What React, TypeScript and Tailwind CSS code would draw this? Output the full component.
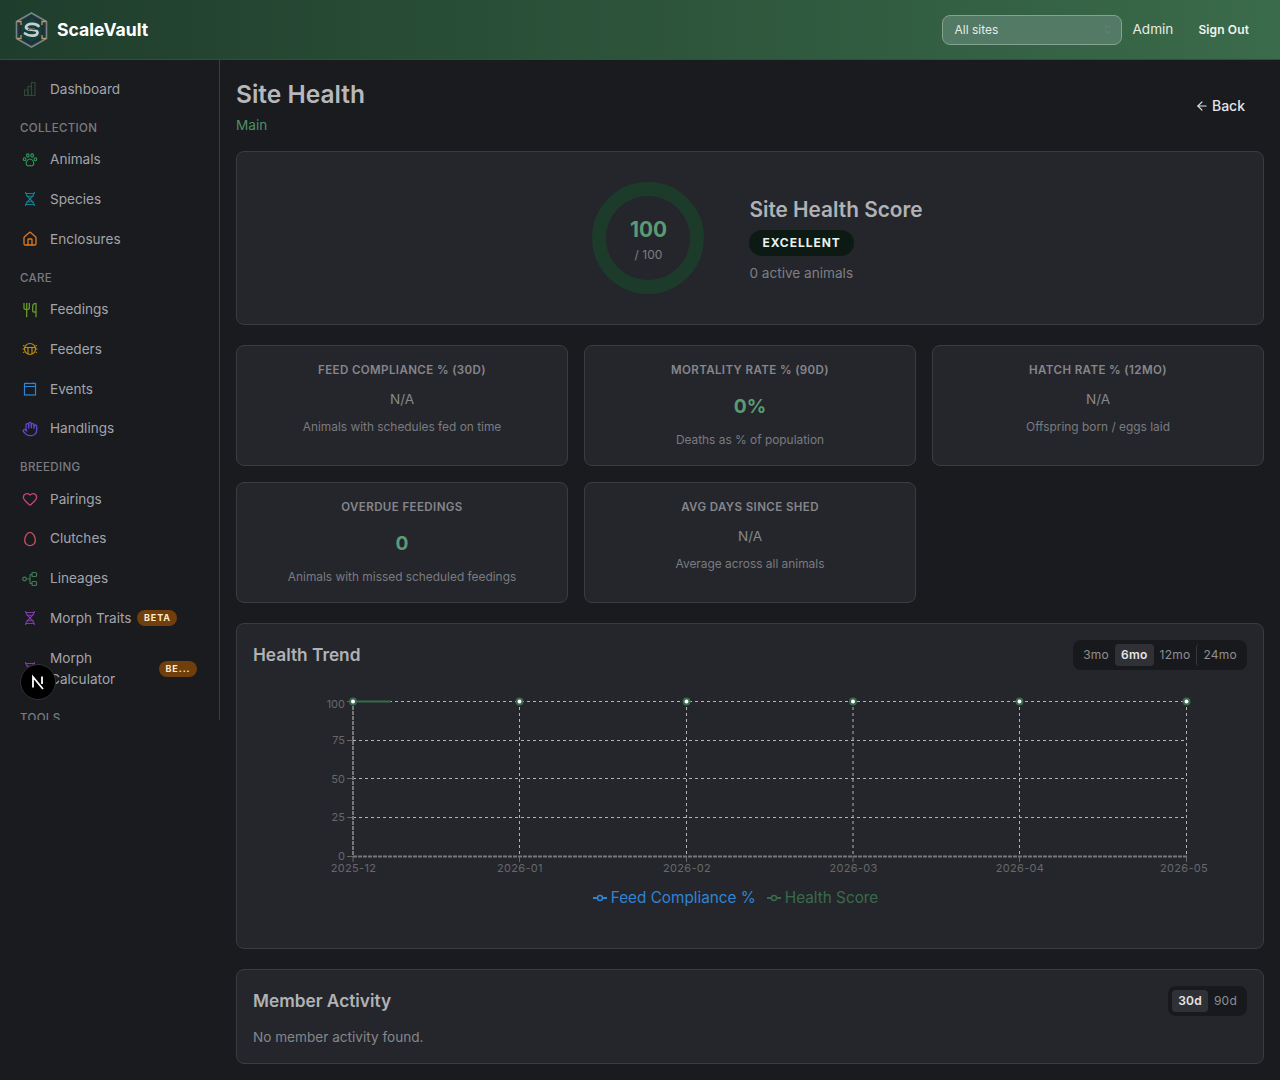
import { useState } from "react";
import { ArrowLeft, ChevronsUpDown, Egg, Hand, Heart, House, Utensils } from "lucide-react";

const font = "font-['Inter','Noto_Sans',sans-serif]";

function DashboardIcon() {
  return (
    <svg width="16" height="16" viewBox="0 0 16 16" fill="none" stroke="#2c4a38" strokeWidth="1.1">
      <rect x="2.5" y="9" width="3.5" height="5.5" />
      <rect x="6" y="5.5" width="3.5" height="9" />
      <rect x="9.5" y="1.5" width="3.5" height="13" />
    </svg>
  );
}

function LineageIcon() {
  return (
    <svg width="16" height="16" viewBox="0 0 16 16" fill="none" stroke="#3f7a57" strokeWidth="1.2">
      <circle cx="2.5" cy="8" r="1.8" />
      <rect x="10" y="1.5" width="4.5" height="4" rx="1" />
      <rect x="10" y="10.5" width="4.5" height="4" rx="1" />
      <path d="M4.3 8H8M8 3.5V12.5M8 3.5H10M8 12.5H10" />
    </svg>
  );
}

function HelixIcon({ color }: { color: string }) {
  return (
    <svg width="16" height="16" viewBox="0 0 16 16" fill="none" stroke={color} strokeWidth="1.1">
      <path d="M3.5 1C3.5 6 12.5 10 12.5 15" />
      <path d="M12.5 1C12.5 6 3.5 10 3.5 15" />
      <path d="M3.5 2.5H12.5M4.5 5.2H11.5M4.5 10.8H11.5M3.5 13.5H12.5" />
    </svg>
  );
}

function PawIcon() {
  return (
    <svg width="16" height="16" viewBox="0 0 16 16" fill="none" stroke="#2f9e58" strokeWidth="1.1">
      <ellipse cx="2.6" cy="7.2" rx="1.3" ry="1.5" />
      <ellipse cx="5.8" cy="3.5" rx="1.3" ry="1.6" />
      <ellipse cx="10.2" cy="3.5" rx="1.3" ry="1.6" />
      <ellipse cx="13.4" cy="7.2" rx="1.3" ry="1.5" />
      <path d="M8 7C6 7 4.5 9.5 4.2 11.2C3.8 13.5 6 14.5 8 13.6C10 14.5 12.2 13.5 11.8 11.2C11.5 9.5 10 7 8 7Z" />
    </svg>
  );
}

function FeederIcon() {
  return (
    <svg width="16" height="16" viewBox="0 0 16 16" fill="none" stroke="#c08c10" strokeWidth="1.2">
      <circle cx="8" cy="8" r="5.5" />
      <path d="M2.5 6.5H13.5M6 6.5V13M10 6.5V13M2.5 5L1 4.5M13.5 5L15 4.5M2.5 8H0.5M13.5 8H15.5M2.5 11L1 11.5M13.5 11L15 11.5" />
    </svg>
  );
}

function CalendarIcon() {
  return (
    <svg width="16" height="16" viewBox="0 0 16 16" fill="none" stroke="#2f84d6" strokeWidth="1.2">
      <rect x="2.5" y="2.5" width="11" height="11.5" />
      <path d="M2.5 5.5H13.5M5 1.5V3M11 1.5V3" />
    </svg>
  );
}

function Logo() {
  return (
    <svg width="33" height="36" viewBox="0 0 33 36">
      <polygon points="16.5,1 31.5,9.5 31.5,26.5 16.5,35 1.5,26.5 1.5,9.5" fill="#22343a" stroke="#75858a" strokeWidth="1.6" />
      <polygon points="16.5,5 27.5,11.5 27.5,24.5 16.5,31 5.5,24.5 5.5,11.5" fill="#12413d" stroke="#1d2b2f" strokeWidth="1" />
      <path d="M23.5 14C20.5 10.5 10.5 11.5 11 15.5C11.5 19 22.5 16 22.5 20.5C22.5 24.5 14 24.5 10 21.5" fill="none" stroke="#c9ccc8" strokeWidth="2.8" strokeLinecap="round" />
      <path d="M13 17.5C16 15.5 20 19 23 16" fill="none" stroke="#20282b" strokeWidth="1" />
      <path d="M2 9.5H6V13M31 9.5H27V13M2 26.5H6V23M31 26.5H27V23" fill="none" stroke="#c59a4b" strokeWidth="1.3" />
    </svg>
  );
}

function NavItem({ icon, label, badge, truncateBadge }: { icon: React.ReactNode; label: string; badge?: string; truncateBadge?: boolean }) {
  return (
    <a className="flex items-center gap-[12px] px-[22px] py-[9.4px] text-[13.6px] leading-[21px] text-[#a3a5ab]">
      <span className="flex w-[16px] shrink-0 justify-center">{icon}</span>
      {truncateBadge ? <span className="w-[90px]">{label}</span> : <span>{label}</span>}
      {badge && (
        <span
          className={`${truncateBadge ? "ml-auto w-[38px]" : "-ml-[6px]"} truncate rounded-full bg-[#713f0b] px-[6.5px] py-[1px] text-[9px] leading-[14px] font-bold tracking-[0.1em] text-[#fdeccf]`}
        >
          {badge}
        </span>
      )}
    </a>
  );
}

function SectionLabel({ children }: { children: string }) {
  return (
    <div className="px-[20px] pt-[9.5px] pb-[3px] text-[11.52px] leading-[18px] font-medium tracking-[0.03em] text-[#797b80]">
      {children}
    </div>
  );
}

function Sidebar() {
  return (
    <aside className="relative h-[660px] w-[220px] shrink-0 overflow-hidden border-r border-[#3a3c42] pt-[9.5px]">
      <NavItem icon={<DashboardIcon />} label="Dashboard" />
      <SectionLabel>COLLECTION</SectionLabel>
      <NavItem icon={<PawIcon />} label="Animals" />
      <NavItem icon={<HelixIcon color="#157f91" />} label="Species" />
      <NavItem icon={<House size={16} color="#d97a22" />} label="Enclosures" />
      <SectionLabel>CARE</SectionLabel>
      <NavItem icon={<Utensils size={16} color="#65962b" />} label="Feedings" />
      <NavItem icon={<FeederIcon />} label="Feeders" />
      <NavItem icon={<CalendarIcon />} label="Events" />
      <NavItem icon={<Hand size={16} color="#6547d0" />} label="Handlings" />
      <SectionLabel>BREEDING</SectionLabel>
      <NavItem icon={<Heart size={16} color="#c7427f" />} label="Pairings" />
      <NavItem icon={<Egg size={16} color="#c9525f" />} label="Clutches" />
      <NavItem icon={<LineageIcon />} label="Lineages" />
      <NavItem icon={<HelixIcon color="#7e3aa8" />} label="Morph Traits" badge="BETA" />
      <NavItem icon={<HelixIcon color="#7e3aa8" />} label="Morph Calculator" badge="BE..." truncateBadge />
      <SectionLabel>TOOLS</SectionLabel>
    </aside>
  );
}

function StatCard({ title, value, sub, good }: { title: string; value: string; sub: string; good?: boolean }) {
  return (
    <div className="flex h-[121px] flex-col items-center rounded-[8px] border border-[#3a3c42] bg-[#25262b] pt-[15px] text-center">
      <div className="text-[11.52px] leading-[18px] font-semibold tracking-[0.035em] text-[#85878c]">{title}</div>
      {good ? (
        <div className="mt-[11px] text-[19.2px] leading-[33px] font-bold text-[#5b9a74]">{value}</div>
      ) : (
        <div className="mt-[10px] text-[13.6px] leading-[21px] text-[#85878c]">{value}</div>
      )}
      <div className="mt-[8px] text-[11.9px] leading-[18px] text-[#797b80]">{sub}</div>
    </div>
  );
}

function Segmented({ options, active }: { options: string[]; active: string }) {
  return (
    <div className="flex items-center rounded-[8px] bg-[#18191d] p-[4px]">
      {options.map((o, i) => (
        <button
          key={o}
          className={`rounded-[4px] px-[6px] py-[1px] text-[12px] leading-[20px] tracking-[0.02em] ${
            o === active ? "bg-[#303136] font-semibold text-[#e4e5e8]" : "text-[#8d8f94]"
          } ${i === 3 ? "border-l border-[#36383d]" : ""}`}
        >
          {o}
        </button>
      ))}
    </div>
  );
}

function TrendChart() {
  const xs = [353, 519.5, 686.5, 853, 1019.5, 1186.5];
  const labels = ["2025-12", "2026-01", "2026-02", "2026-03", "2026-04", "2026-05"];
  const ys = [
    { y: 701.5, l: "100", ty: 704 },
    { y: 740.5, l: "75", ty: 740 },
    { y: 778.5, l: "50", ty: 779 },
    { y: 817.5, l: "25", ty: 817 },
    { y: 856.5, l: "0", ty: 856 },
  ];
  return (
    <svg width="1026" height="250" viewBox="237 680 1026 250" className="mt-[10px] block">
      {ys.map((t, i) => (
        <g key={t.l}>
          {i < 4 && <line x1="353" x2="1187" y1={t.y} y2={t.y} stroke="#b4b4b4" strokeWidth="1" strokeDasharray="3 3" />}
          <line x1="347" x2="353" y1={t.y} y2={t.y} stroke="#666" />
          <text x="345" y={t.ty + 4} textAnchor="end" fontSize="11" fill="#66686c" fontFamily="Inter">{t.l}</text>
        </g>
      ))}
      {xs.map((x, i) => (
        <g key={x}>
          {i > 0 && <line x1={x} x2={x} y1="701" y2="856" stroke="#b4b4b4" strokeWidth="1" strokeDasharray="3 3" />}
          <line x1={x} x2={x} y1="856" y2="862" stroke="#666" />
          <text x={i === 5 ? 1184 : x + 0.5} y="872" textAnchor="middle" fontSize="11" letterSpacing="0.3" fill="#66686c" fontFamily="Inter">{labels[i]}</text>
        </g>
      ))}
      <line x1="353" x2="353" y1="701" y2="856" stroke="#777" strokeWidth="2" strokeDasharray="4 1" />
      <line x1="353" x2="1187" y1="856.5" y2="856.5" stroke="#777" strokeWidth="2" strokeDasharray="4 1" />
      <line x1="353" x2="391" y1="701.5" y2="701.5" stroke="#386b4c" strokeWidth="2" />
      {xs.map((x) => (
        <circle key={x} cx={x} cy="701.5" r="3" fill="#fff" stroke="#386b4c" strokeWidth="2" />
      ))}
    </svg>
  );
}

function LegendMark({ color }: { color: string }) {
  return (
    <svg width="14" height="14" viewBox="0 0 14 14" className="mt-[5px]">
      <line x1="0" x2="14" y1="7" y2="7" stroke={color} strokeWidth="2" />
      <circle cx="7" cy="7" r="2.5" fill="#25262b" stroke={color} strokeWidth="1.5" />
    </svg>
  );
}

export default function App() {
  const [range] = useState("6mo");
  const [memberRange] = useState("30d");

  return (
    <div className={`min-h-[1080px] bg-[#1a1b1f] ${font}`}>
      <header className="flex h-[60px] items-center justify-between border-b border-[#3a4a40] bg-[linear-gradient(90deg,#1f3d2c,#3a6b4a)] pr-[31px] pl-[15px]">
        <div className="flex items-center gap-[9px]">
          <Logo />
          <span className="text-[17.6px] leading-[27px] font-bold text-white">ScaleVault</span>
        </div>
        <div className="flex items-center">
          <div className="flex h-[30px] w-[180px] items-center justify-between rounded-[8px] border border-[#83a291] bg-[#527a65] pr-[8px] pl-[11px] text-[12px] text-[#e8ece9]">
            All sites
            <ChevronsUpDown size={11} color="#6b8577" />
          </div>
          <span className="ml-[10px] text-[13.6px] text-[#e8ece9]">Admin</span>
          <span className="ml-[25px] text-[12px] font-semibold tracking-[0.01em] text-[#f1f3f1]">Sign Out</span>
        </div>
      </header>

      <div className="flex">
        <Sidebar />
        <main className="min-w-0 flex-1 px-[16px] pt-[16px]">
          <div className="flex items-start justify-between">
            <div>
              <h1 className="text-[24.5px] leading-[36px] font-semibold text-[#b6b8bc]">Site Health</h1>
              <div className="mt-[3px] text-[13.6px] leading-[21px] text-[#4f8f6a]">Main</div>
            </div>
            <button className="mt-[19px] mr-[19px] flex items-center gap-[3px] text-[14px] leading-[21px] font-medium text-[#e4e5e8]">
              <ArrowLeft size={14} strokeWidth={2} /> Back
            </button>
          </div>

          <section className="mt-[15px] flex h-[174px] items-center justify-center gap-[45px] rounded-[8px] border border-[#3a3c42] bg-[#25262b] pl-[15px]">
            <div className="relative h-[112px] w-[112px]">
              <svg width="112" height="112" viewBox="0 0 112 112">
                <circle cx="56" cy="56" r="49" fill="none" stroke="#1c3b2b" strokeWidth="14" />
              </svg>
              <div className="absolute inset-0 flex flex-col items-center justify-center">
                <div className="text-[20.8px] leading-[33px] font-bold text-[#5b9a74]">100</div>
                <div className="text-[12px] leading-[18px] text-[#7d7f84]">/ 100</div>
              </div>
            </div>
            <div className="pt-[2px]">
              <div className="text-[20.8px] leading-[31px] font-semibold text-[#b0b2b6]">Site Health Score</div>
              <div className="mt-[5px] inline-block rounded-full bg-[#0c1a13] px-[13px] py-[3px] align-top text-[12px] leading-[20px] font-bold tracking-[0.08em] text-[#e9f2ec]">
                EXCELLENT
              </div>
              <div className="mt-[7px] text-[13.6px] leading-[21px] text-[#7d7f84]">0 active animals</div>
            </div>
          </section>

          <div className="mt-[20px] grid grid-cols-3 gap-[16px]">
            <StatCard title="FEED COMPLIANCE % (30D)" value="N/A" sub="Animals with schedules fed on time" />
            <StatCard title="MORTALITY RATE % (90D)" value="0%" sub="Deaths as % of population" good />
            <StatCard title="HATCH RATE % (12MO)" value="N/A" sub="Offspring born / eggs laid" />
            <StatCard title="OVERDUE FEEDINGS" value="0" sub="Animals with missed scheduled feedings" good />
            <StatCard title="AVG DAYS SINCE SHED" value="N/A" sub="Average across all animals" />
          </div>

          <section className="mt-[20px] h-[326px] rounded-[8px] border border-[#3a3c42] bg-[#25262b]">
            <div className="flex items-center justify-between px-[16px] pt-[16px]">
              <h2 className="pb-[2px] text-[17.28px] leading-[27px] font-semibold text-[#b0b2b6]">Health Trend</h2>
              <Segmented options={["3mo", "6mo", "12mo", "24mo"]} active={range} />
            </div>
            <TrendChart />
            <div className="-mt-[44px] flex items-start justify-center gap-[11px] pr-[29px] text-[15.3px] leading-[24px]">
              <span className="flex gap-[4px] text-[#2f84d6]"><LegendMark color="#2f84d6" />Feed Compliance %</span>
              <span className="flex gap-[4px] text-[#386b4c]"><LegendMark color="#386b4c" />Health Score</span>
            </div>
          </section>

          <section className="mt-[20px] h-[95px] rounded-[8px] border border-[#3a3c42] bg-[#25262b] px-[16px] pt-[16px]">
            <div className="flex items-center justify-between">
              <h2 className="pb-[2px] text-[17.28px] leading-[27px] font-semibold text-[#b0b2b6]">Member Activity</h2>
              <Segmented options={["30d", "90d"]} active={memberRange} />
            </div>
            <p className="mt-[11px] text-[13.6px] leading-[21px] text-[#85878c]">No member activity found.</p>
          </section>
        </main>
      </div>

      <div className="fixed top-[664px] left-[20px] flex h-[36px] w-[36px] items-center justify-center rounded-full border border-[#333] bg-black">
        <svg width="18" height="18" viewBox="0 0 18 18" fill="none" stroke="#fff" strokeWidth="1.8">
          <path d="M4 14.5V4L14 16" />
          <path d="M13 3.5V11" />
        </svg>
      </div>
    </div>
  );
}
